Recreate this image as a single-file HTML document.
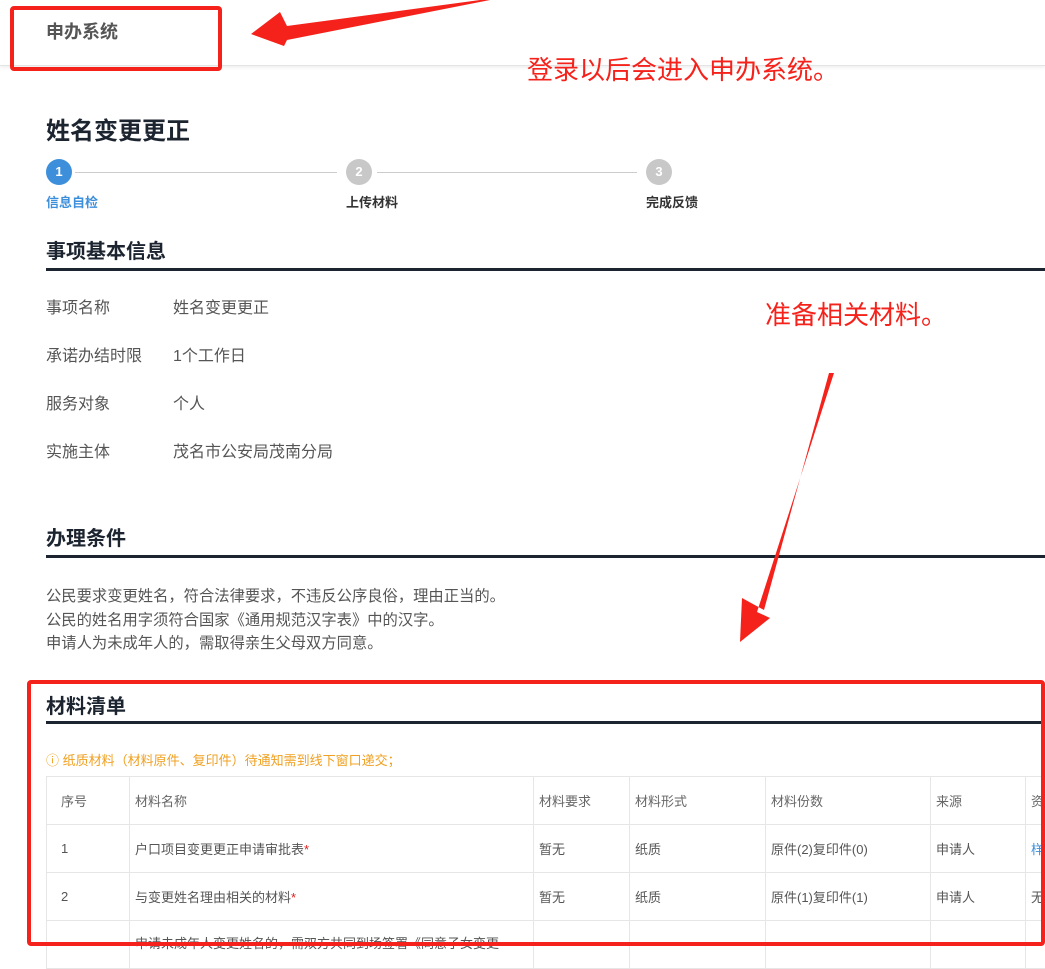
<!DOCTYPE html>
<html><head><meta charset="utf-8"><style>
*{margin:0;padding:0;box-sizing:border-box}
body{width:1045px;height:946px;overflow:hidden;background:#fff;font-family:"Liberation Sans","Noto Sans CJK SC",sans-serif;color:#555;position:relative}
.a{position:absolute;white-space:nowrap}
.hdr{position:absolute;left:0;top:0;width:1045px;height:66px;border-bottom:1px solid #e4e4e4;box-shadow:0 2px 3px rgba(0,0,0,.06)}
.h2{font-size:20px;font-weight:bold;color:#1c2430}
.bar{position:absolute;left:46px;width:999px;height:3px;background:#1c2430}
.lbl{font-size:16px;color:#555}
.red{color:#f5221b;font-size:26px}
.circ{position:absolute;width:26px;height:26px;border-radius:50%;color:#fff;font-size:13px;font-weight:bold;text-align:center;line-height:26px}
.ln{position:absolute;height:1px;background:#ccc;top:172px}
table{position:absolute;left:46px;top:776px;width:1040px;border-collapse:collapse;font-size:13px;color:#555;table-layout:fixed}
td{border:1px solid #e6e6e6;height:48px;padding-left:5px;vertical-align:middle;white-space:nowrap;overflow:hidden}
td:first-child{padding-left:14px}
tr.th td{color:#666}
.s{color:#e02020}
</style></head><body>
<div class="hdr"></div>
<div class="a" style="left:46px;top:18px;font-size:18px;font-weight:bold;color:#555">申办系统</div>
<div class="a" style="left:10px;top:6px;width:212px;height:65px;border:4px solid #f5221b;border-radius:4px"></div>
<div class="a red" style="left:527px;top:50px">登录以后会进入申办系统。</div>
<div class="a" style="left:46px;top:111px;font-size:24px;font-weight:bold;color:#1c2430">姓名变更更正</div>
<div class="circ" style="left:46px;top:159px;background:#3d8fdb">1</div>
<div class="ln" style="left:75px;width:262px"></div>
<div class="circ" style="left:346px;top:159px;background:#c8c8c8">2</div>
<div class="ln" style="left:377px;width:260px"></div>
<div class="circ" style="left:646px;top:159px;background:#c8c8c8">3</div>
<div class="a" style="left:46px;top:192px;font-size:13px;color:#3d8fdb;font-weight:bold">信息自检</div>
<div class="a" style="left:346px;top:192px;font-size:13px;color:#333;font-weight:bold">上传材料</div>
<div class="a" style="left:646px;top:192px;font-size:13px;color:#333;font-weight:bold">完成反馈</div>
<div class="a h2" style="left:46px;top:235px">事项基本信息</div>
<div class="bar" style="top:268px"></div>
<div class="a lbl" style="left:46px;top:294px">事项名称</div><div class="a lbl" style="left:173px;top:294px">姓名变更更正</div>
<div class="a lbl" style="left:46px;top:342px">承诺办结时限</div><div class="a lbl" style="left:173px;top:342px">1个工作日</div>
<div class="a lbl" style="left:46px;top:390px">服务对象</div><div class="a lbl" style="left:173px;top:390px">个人</div>
<div class="a lbl" style="left:46px;top:438px">实施主体</div><div class="a lbl" style="left:173px;top:438px">茂名市公安局茂南分局</div>
<div class="a red" style="left:765px;top:295px">准备相关材料。</div>
<div class="a h2" style="left:46px;top:522px">办理条件</div>
<div class="bar" style="top:555px"></div>
<div class="a" style="left:46px;top:585px;line-height:23.5px;font-size:15.3px">公民要求变更姓名，符合法律要求，不违反公序良俗，理由正当的。<br>公民的姓名用字须符合国家《通用规范汉字表》中的汉字。<br>申请人为未成年人的，需取得亲生父母双方同意。</div>
<div class="a h2" style="left:46px;top:690px">材料清单</div>
<div class="bar" style="top:721px"></div>
<div class="a" style="left:46px;top:750px;font-size:13px;color:#f0a020">ⓘ 纸质材料（材料原件、复印件）待通知需到线下窗口递交；</div>
<table>
<colgroup><col style="width:83px"><col style="width:404px"><col style="width:96px"><col style="width:136px"><col style="width:165px"><col style="width:95px"><col style="width:61px"></colgroup>
<tr class="th"><td>序号</td><td>材料名称</td><td>材料要求</td><td>材料形式</td><td>材料份数</td><td>来源</td><td>资</td></tr>
<tr><td>1</td><td>户口项目变更更正申请审批表<span class="s">*</span></td><td>暂无</td><td>纸质</td><td>原件(2)复印件(0)</td><td>申请人</td><td style="color:#3d8fdb">样</td></tr>
<tr><td>2</td><td>与变更姓名理由相关的材料<span class="s">*</span></td><td>暂无</td><td>纸质</td><td>原件(1)复印件(1)</td><td>申请人</td><td>无</td></tr>
<tr><td></td><td style="vertical-align:top;padding-top:12px">申请未成年人变更姓名的，需双方共同到场签署《同意子女变更</td><td></td><td></td><td></td><td></td><td></td></tr>
</table>
<div class="a" style="left:27px;top:680px;width:1018px;height:266px;border:4px solid #f5221b;border-radius:4px"></div>
<svg class="a" style="left:0;top:0" width="1045" height="946">
<polygon fill="#f5221b" points="490,0 480,0 287,26 280,12 251,34 284,46 287,40"/>
<polygon fill="#f5221b" points="834,373 829,373 764,610 742,598 740,642 770,618 757,612"/>
</svg>
</body></html>
